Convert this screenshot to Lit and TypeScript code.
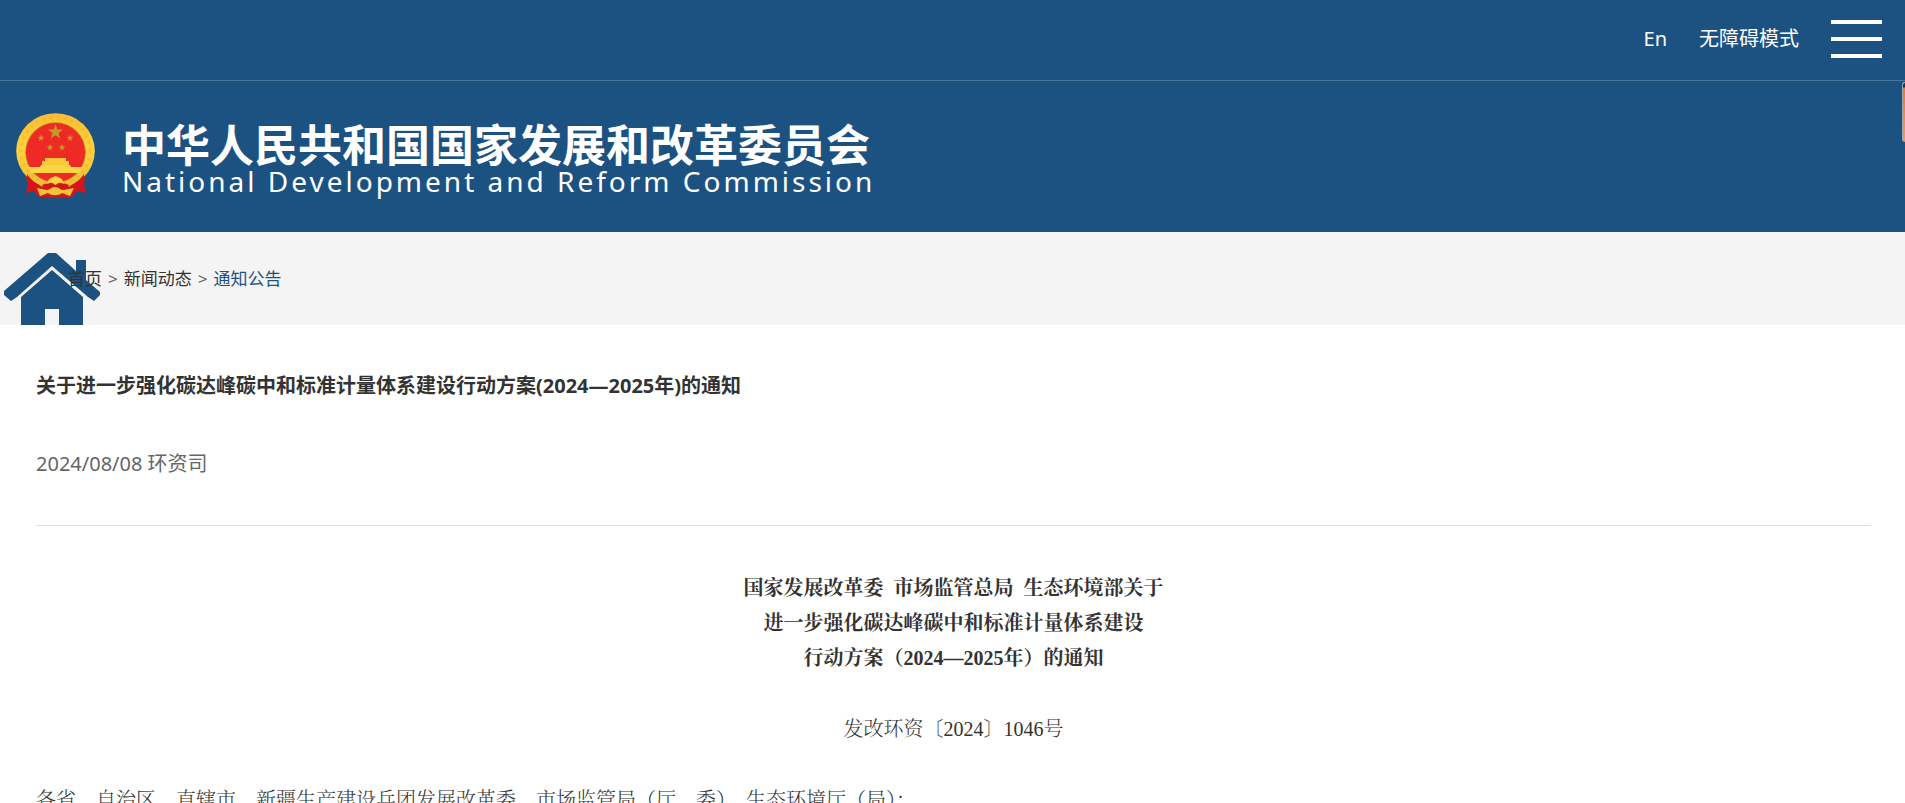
import { LitElement, html, css, svg } from "lit";
import { customElement } from "lit/decorators.js";

const STAR = "0,-10 2.4,-3.2 9.5,-3.1 3.8,1.2 5.9,8.1 0,4 -5.9,8.1 -3.8,1.2 -9.5,-3.1 -2.4,-3.2";

const stars = [
  { x: 39.5, y: 19, s: 0.8 },
  { x: 25, y: 25, s: 0.36 },
  { x: 54, y: 25, s: 0.36 },
  { x: 34, y: 34.5, s: 0.36 },
  { x: 46, y: 34.5, s: 0.36 },
];

@customElement("site-emblem")
class SiteEmblem extends LitElement {
  static styles = css`
    :host { display: block; }
    .emblem { display: block; width: 79px; height: 85px; }
  `;
  render() {
    return html`<svg class="emblem" viewBox="0 0 79 85" role="img" aria-label="国徽">
      <defs>
        <linearGradient id="gold" x1="0" y1="0" x2="0" y2="1">
          <stop offset="0" stop-color="#f6bd35" />
          <stop offset="0.5" stop-color="#ffd23e" />
          <stop offset="1" stop-color="#eebc31" />
        </linearGradient>
      </defs>
      <path d="M12 60l8 6h39l8-6 2 5-1 7 2 7-9-1-5 6c-10 1-24 1-33 0l-5-6-8 1 2-7-2-8z" fill="#d4151a" />
      <ellipse cx="39.5" cy="38" rx="39.300" ry="37.800" fill="url(#gold)" />
      <ellipse cx="39.5" cy="38" rx="34.500" ry="33.500" fill="none" stroke="#eeb02c" stroke-width="3" stroke-dasharray="3 4" opacity="0.5" />
      <circle cx="39.5" cy="39.5" r="30.3" fill="#c98b20" />
      <circle cx="39.5" cy="39.5" r="29.5" fill="#ee2a24" />
      ${stars.map((p) => svg`<polygon points=${STAR} transform="translate(${p.x} ${p.y}) scale(${p.s})" fill="#c9962c" />`)}
      <path d="M29 45h21v3h3v4h-27v-4h3z" fill="#f9c83b" />
      <path d="M25 52h29l1 2h12l-3 6h-49l-3-6h12z" fill="#fbd444" />
      <path d="M11 61c4 6 9 9 14 12l-4 7-4-2-7 2 2-8-1-6z" fill="#d4151a" />
      <path d="M68 61c-4 6-9 9-14 12l4 7 4-2 7 2-2-8 1-6z" fill="#d4151a" />
      <path d="M26 72c7-3 20-3 27 0l-3 5h-21z" fill="#cf171b" />
      <path d="M23 82l5-7c7 5 16 5 23 0l5 7c-8 3-25 3-33 0z" fill="#d4151a" />
      <path d="M31 71l2-5 4-2 2.500-1 2.500 1 4 2 2 5-4-2-4.500 3-4.500-3z" fill="#ffd23e" />
      <path d="M21 75l10 2c3 0 4-3 8-3s5 3 8 3l11-2-4 8-8-3c-4 3-10 3-14 0l-8 3z" fill="#f5c338" />
    </svg>`;
  }
}

@customElement("site-header")
class SiteHeader extends LitElement {
  static styles = css`
    :host { display: block; background: #1c5282; color: #fff; }
    .tools {
      display: flex; align-items: center; justify-content: flex-end; gap: 32px;
      padding: 20px 23px 22px; border-bottom: 1px solid #48749b;
    }
    .link { color: #fff; text-decoration: none; font-size: 20px; line-height: 28px; }
    .menu {
      display: flex; flex-direction: column; justify-content: space-between;
      width: 51px; height: 38px; padding: 0; border: 0; background: none; cursor: pointer;
    }
    .bar { display: block; height: 4px; background: #fff; }
    .brand {
      display: flex; align-items: flex-start; gap: 27px;
      padding: 32px 16px 34px; color: #fff; text-decoration: none;
    }
    .names { display: flex; flex-direction: column; padding-top: 10px; }
    .zh { font-size: 44px; line-height: 44px; font-weight: 700; }
    .en { font-family: "Noto Sans", sans-serif; font-size: 28px; line-height: 28px; letter-spacing: 3px; }
  `;
  render() {
    return html`
      <nav class="tools">
        <a class="link" href="#en">En</a>
        <a class="link" href="#accessible">无障碍模式</a>
        <button class="menu" type="button" aria-label="菜单">
          <span class="bar"></span><span class="bar"></span><span class="bar"></span>
        </button>
      </nav>
      <a class="brand" href="#home">
        <site-emblem></site-emblem>
        <span class="names">
          <span class="zh">中华人民共和国国家发展和改革委员会</span>
          <span class="en">National Development and Reform Commission</span>
        </span>
      </a>
    `;
  }
}

@customElement("site-crumbs")
class SiteCrumbs extends LitElement {
  static styles = css`
    :host { display: block; background: #f4f4f4; }
    .crumbs {
      position: relative; display: flex; align-items: center; gap: 6px;
      height: 93px; padding-left: 68px; overflow: hidden;
      font-size: 17px; line-height: 24px; color: #666;
    }
    .house { position: absolute; left: 4px; bottom: 0; width: 96px; height: 72px; }
    .link { position: relative; color: #333; text-decoration: none; }
    .current { color: #1c5282; }
  `;
  render() {
    return html`<nav class="crumbs">
      <svg class="house" viewBox="0 0 96 72" aria-hidden="true">
        <path d="M44 0h8l20 18V7h10v20l14 12v3l-6 6-6-4-36-31-35 31-6 4-7-6v-4z" fill="#1c5282" />
        <path d="M48 17l31 27v28H55V56H41v16H17V44z" fill="#1c5282" />
      </svg>
      <a class="link" href="#home">首页</a><span>&gt;</span>
      <a class="link" href="#news">新闻动态</a><span>&gt;</span>
      <a class="link current" href="#notices">通知公告</a>
    </nav>`;
  }
}

@customElement("notice-article")
class NoticeArticle extends LitElement {
  static styles = css`
    :host { display: block; padding: 41px 34px 40px 36px; }
    .title { margin: 0; font-size: 20px; line-height: 40px; font-weight: 700; color: #333; }
    .meta {
      margin: 0 0 45px; padding: 38px 0 41px; border-bottom: 1px solid #ddd;
      font-size: 20px; line-height: 40px; color: #666;
    }
    .body {
      font-family: "Liberation Serif", "Noto Serif CJK SC", "Noto Sans CJK SC", serif;
      font-size: 20px; line-height: 35px; color: #333;
    }
    .heading { margin: 0; font-size: 20px; font-weight: 700; text-align: center; }
    .number { margin: 36px 0; text-align: center; font-weight: 300; }
    .address { margin: 0; font-weight: 300; }
  `;
  render() {
    return html`
      <h1 class="title">关于进一步强化碳达峰碳中和标准计量体系建设行动方案(2024—2025年)的通知</h1>
      <p class="meta">2024/08/08 环资司</p>
      <div class="body">
        <h2 class="heading">
          国家发展改革委&nbsp; 市场监管总局&nbsp; 生态环境部关于<br />
          进一步强化碳达峰碳中和标准计量体系建设<br />
          行动方案（2024—2025年）的通知
        </h2>
        <p class="number">发改环资〔2024〕1046号</p>
        <p class="address">各省、自治区、直辖市、新疆生产建设兵团发展改革委、市场监管局（厅、委）、生态环境厅（局）：</p>
      </div>
    `;
  }
}

@customElement("app-root")
class AppRoot extends LitElement {
  static styles = css`
    :host {
      display: block; position: relative; background: #fff;
      font-family: "Noto Sans", "Noto Sans CJK SC", sans-serif;
    }
    .tab {
      position: absolute; top: 82px; right: 0; width: 3px; height: 60px; box-sizing: border-box;
      border: 1px solid #9aa5b0; border-right: 0; border-radius: 3px 0 0 3px;
      background: linear-gradient(#1f2f4a 4px, #ee7526 5px, #f59a55);
    }
  `;
  render() {
    return html`
      <site-header></site-header>
      <site-crumbs></site-crumbs>
      <main><notice-article lang="zh-CN"></notice-article></main>
      <div class="tab"></div>
    `;
  }
}
